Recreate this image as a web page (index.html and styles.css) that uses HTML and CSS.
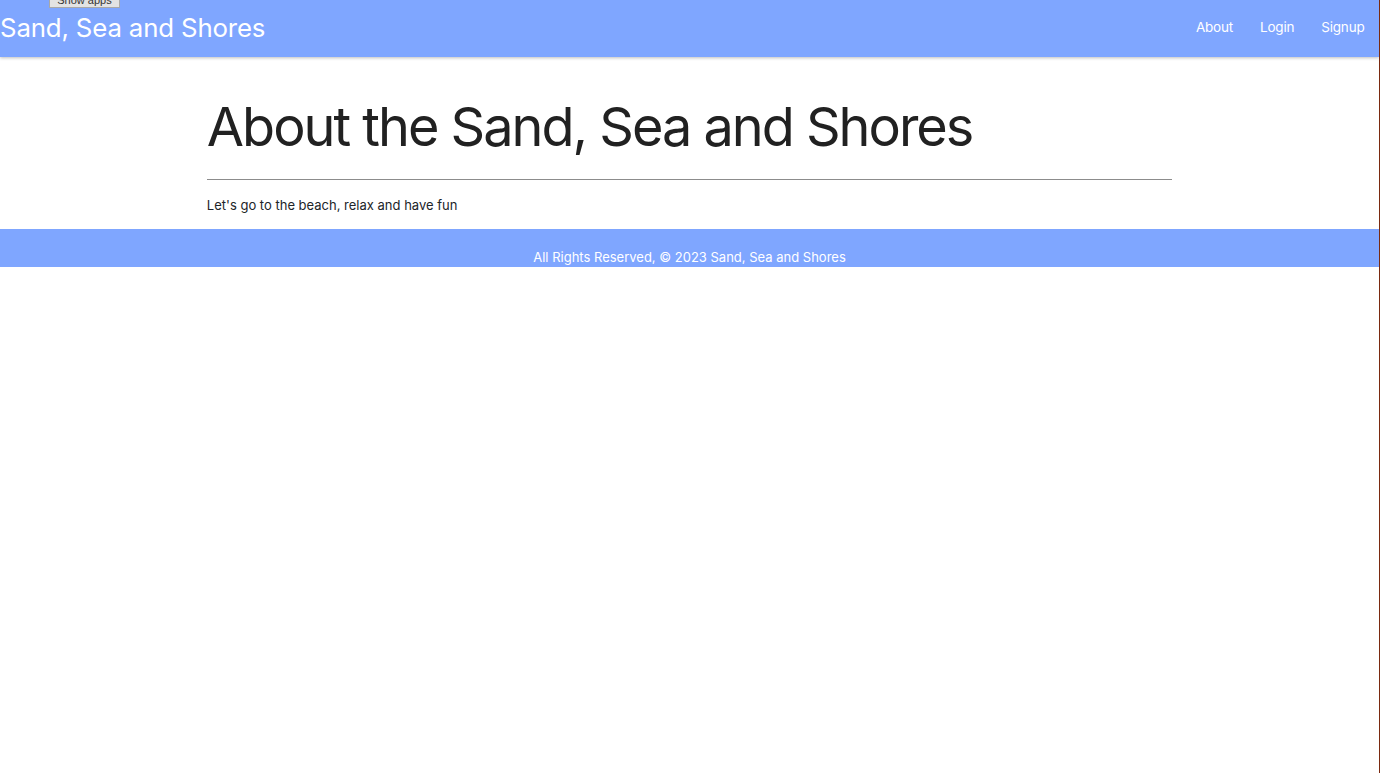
FILE: index.html
```html
<!DOCTYPE html>
<html>
<head>
<meta charset="utf-8">
<title>Sand, Sea and Shores</title>
<link rel="stylesheet" href="styles.css">
</head>
<body>
<button class="show-apps">Show apps</button>
<header class="navbar">
  <a class="brand" href="#">Sand, Sea and Shores</a>
  <nav class="nav">
    <a href="#">About</a>
    <a href="#">Login</a>
    <a href="#">Signup</a>
  </nav>
</header>
<main class="container">
  <h1>About the Sand, Sea and Shores</h1>
  <hr>
  <p>Let's go to the beach, relax and have fun</p>
</main>
<footer class="footer">All Rights Reserved, © 2023 Sand, Sea and Shores</footer>
</body>
</html>
```
FILE: styles.css
```css
html, body {
  margin: 0;
  padding: 0;
  background: #fff;
}
body {
  font-family: Inter, "Liberation Sans", sans-serif;
  color: #212529;
  border-right: 1px solid #7a2a10;
  min-height: 773px;
  box-sizing: border-box;
  position: relative;
}
.show-apps {
  position: absolute;
  left: 49px;
  top: -7px;
  width: 71px;
  height: 15px;
  font-size: 11px;
  line-height: 13px;
  font-family: "Liberation Sans", sans-serif;
  background: #e3e3e3;
  border: 1px solid #a8a8a8;
  color: #333;
  padding: 0;
  z-index: 5;
}
.navbar {
  height: 57px;
  background: #7fa6ff;
  display: flex;
  align-items: center;
  justify-content: space-between;
  box-shadow: 0 1px 3px rgba(0,0,0,0.25);
  position: relative;
  z-index: 2;
}
.brand {
  color: #fff;
  text-decoration: none;
  font-size: 25.8px;
  letter-spacing: -0.15px;
  padding-bottom: 2px;
}
.nav {
  display: flex;
  padding-right: 1px;
  padding-bottom: 3px;
}
.nav a {
  color: #fff;
  text-decoration: none;
  font-size: 13.5px;
  letter-spacing: -0.2px;
  padding: 0 13.5px;
}
.container {
  width: 70%;
  margin: 0 auto;
  padding-top: 38px;
}
h1 {
  font-weight: 400;
  font-size: 54px;
  letter-spacing: -2px;
  line-height: 1.2;
  margin: 0;
  color: #212121;
}
hr {
  border: 0;
  border-top: 1px solid #8c8c8c;
  margin: 19px 0 0;
}
p {
  font-size: 13px;
  margin: 17px 0 16px;
}
.footer {
  background: #7fa6ff;
  color: #fff;
  text-align: center;
  font-size: 13px;
  height: 38px;
  box-sizing: border-box;
  padding-top: 20px;
}
```
